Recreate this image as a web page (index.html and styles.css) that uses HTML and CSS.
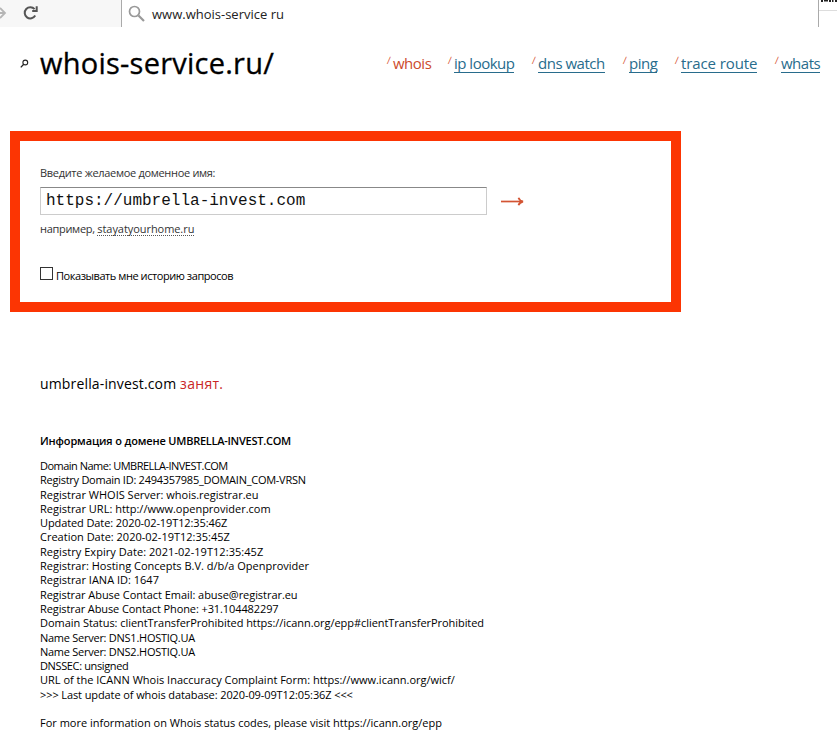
FILE: index.html
```html
<!DOCTYPE html>
<html lang="ru">
<head>
<meta charset="utf-8">
<title>whois-service.ru</title>
<link rel="stylesheet" href="styles.css">
</head>
<body>
<div class="toolbar">
  <div class="nav-buttons">
    <svg class="forward" width="8" height="27" viewBox="0 0 8 27" fill="none" stroke="#b5b5b5" stroke-width="1.8"><path d="M0 13H5M0 8L5 13L0 18"/></svg>
    <svg class="reload" width="18" height="27" viewBox="0 0 18 27"><path d="M12.6 9.2A5.6 5.6 0 1 0 13.2 15.6" fill="none" stroke="#555" stroke-width="2"/><path d="M15.7 6.3V12H10.2V10H13.7V6.3Z" fill="#555"/></svg>
  </div>
  <div class="search">
    <svg width="18" height="18" viewBox="0 0 18 18" fill="none" stroke="#999"><circle cx="6.5" cy="6.5" r="5" stroke-width="1.7"/><path d="M10.5 10.5L16 16" stroke-width="2.2"/></svg>
    <span class="query">www.whois-service ru</span>
  </div>
  <div class="toolbar-end"><div class="tail"><svg width="18" height="2" viewBox="0 0 18 2" fill="#222"><path d="M2 0H4V2H2ZM5 0H9V1.5H5ZM10 0H12V2H10ZM13 0H14.5V2H13ZM16 0H18V2H16Z"/></svg></div></div>
</div>
<header class="header">
  <svg class="logo-mark" width="10" height="10" viewBox="0 0 10 10" fill="none" stroke="#222"><circle cx="5.3" cy="3.5" r="2.4" stroke-width="1.1"/><path d="M3.7 5.3L.8 8.4" stroke-width="1.3"/></svg>
  <h1 class="logo">whois-service.ru/</h1>
  <nav class="menu">
    <span class="item whois">whois</span>
    <span class="item ip"><a>ip lookup</a></span>
    <span class="item dns"><a>dns watch</a></span>
    <span class="item ping"><a>ping</a></span>
    <span class="item trace"><a>trace route</a></span>
    <span class="item whats"><a>whats</a></span>
  </nav>
</header>
<form class="lookup">
  <label class="label">Введите желаемое доменное имя:</label>
  <div class="row">
    <div class="field">https://umbrella-invest.com</div>
    <svg width="24" height="12" viewBox="0 0 24 12" fill="none" stroke="#d35433"><path d="M0 6.5H21" stroke-width="1.7"/><path d="M17.5 2.7Q18.5 5.7 22 6.5Q18.5 7.3 17.5 10.3" stroke-width="1.8"/></svg>
  </div>
  <p class="example"><span class="hint">например, </span><span class="sample">stayatyourhome.ru</span></p>
  <label class="history"><span class="box"></span><span>Показывать мне историю запросов</span></label>
</form>
<main class="result">
  <p class="status">umbrella-invest.com <span class="taken">занят.</span></p>
  <h2 class="title">Информация о домене <span class="domain">UMBRELLA-INVEST.COM</span></h2>
  <div class="record">
    <div class="name">Domain Name: UMBRELLA-INVEST.COM</div>
    <div class="caps">Registry Domain ID: 2494357985_DOMAIN_COM-VRSN</div>
    <div>Registrar WHOIS Server: whois.registrar.eu</div>
    <div>Registrar URL: http://www.openprovider.com</div>
    <div class="snug">Updated Date: 2020-02-19T12:35:46Z</div>
    <div>Creation Date: 2020-02-19T12:35:45Z</div>
    <div class="loose">Registry Expiry Date: 2021-02-19T12:35:45Z</div>
    <div>Registrar: Hosting Concepts B.V. d/b/a Openprovider</div>
    <div>Registrar IANA ID: 1647</div>
    <div class="slight">Registrar Abuse Contact Email: abuse@registrar.eu</div>
    <div class="snug">Registrar Abuse Contact Phone: +31.104482297</div>
    <div class="slight">Domain Status: clientTransferProhibited https://icann.org/epp#clientTransferProhibited</div>
    <div class="caps">Name Server: DNS1.HOSTIQ.UA</div>
    <div class="caps">Name Server: DNS2.HOSTIQ.UA</div>
    <div class="dnssec">DNSSEC: unsigned</div>
    <div>URL of the ICANN Whois Inaccuracy Complaint Form: https://www.icann.org/wicf/</div>
    <div class="snug">&gt;&gt;&gt; Last update of whois database: 2020-09-09T12:05:36Z &lt;&lt;&lt;</div>
    <div class="more">For more information on Whois status codes, please visit https://icann.org/epp</div>
  </div>
</main>
</body>
</html>
```
FILE: styles.css
```css
* { box-sizing: border-box; }
body { margin: 0; width: 837px; height: 732px; overflow: hidden; background: #fff; color: #000; font: 11px/14.3px "Trebuchet MS", "Open Sans", "Noto Sans", sans-serif; }
h1, h2, p { margin: 0; font-weight: 400; }
svg { display: block; flex: none; }
.toolbar { display: flex; height: 27px; }
.nav-buttons { display: flex; gap: 14px; width: 121px; background: #f7f7f7; }
.search { display: flex; align-items: center; gap: 5px; width: 697px; padding-left: 6px; border-left: 1px solid #aaa; }
.query { font-size: 13px; line-height: 27px; padding: 2px 0 0 1px; color: #222; white-space: pre; }
.toolbar-end { width: 19px; border-left: 1px solid #aaa; }
.tail { height: 11px; border-bottom: 1px solid #ddd; }
.header { display: flex; align-items: center; height: 74px; padding-left: 20px; }
.logo-mark { margin-right: 10px; }
.logo { width: 347px; margin-top: -2px; font-size: 29px; line-height: 36px; letter-spacing: .24px; color: #000; -webkit-text-stroke: .3px #000; white-space: nowrap; }
.menu { display: flex; font-size: 15px; line-height: 17px; letter-spacing: -.5px; color: #286c8c; white-space: nowrap; }
.item::before { content: "/"; display: inline-block; width: 5px; margin-right: 1px; font-size: 10px; color: #d9593a; vertical-align: 5px; line-height: 8px; transform: skewX(-4deg); }
.item a { border-bottom: 1px solid #286c8c; display: inline-block; }
.whois { width: 61px; color: #cc4b2c; }
.ip { width: 84px; }
.dns { width: 91px; }
.ping { width: 52px; }
.trace { width: 100px; letter-spacing: -.1px; }
.lookup { width: 671px; height: 181px; margin: 30px 0 0 10px; padding: 24px 20px 0; border: 10px solid #fc3503; color: #333; }
.label { display: block; line-height: 15px; margin-bottom: 7px; letter-spacing: -.31px; }
.row { display: flex; align-items: center; gap: 14px; }
.field { width: 447px; height: 28px; padding-left: 5px; border: 1px solid #ccc; border-top-color: #888; font: 16px/26px "Liberation Mono", monospace; color: #111; }
.example { margin-top: 6px; line-height: 15px; }
.hint { letter-spacing: -.3px; }
.sample { border-bottom: 1px dotted #555; display: inline-block; line-height: 13px; letter-spacing: -.06px; }
.history { display: flex; gap: 3px; margin-top: 31px; line-height: 17px; letter-spacing: -.44px; color: #000; }
.box { width: 13px; height: 13px; border: 1px solid #333; background: #fff; }
.result { padding: 62px 0 0 40px; }
.status { font-size: 14px; line-height: 20px; letter-spacing: .15px; }
.taken { color: #c92626; letter-spacing: .3px; }
.title { margin: 40px 0 0; font-size: 11px; line-height: 14px; font-weight: 600; letter-spacing: -.14px; }
.domain { letter-spacing: -.26px; }
.record { margin-top: 11px; white-space: nowrap; }
.name { letter-spacing: -.51px; }
.caps { letter-spacing: -.26px; }
.dnssec { letter-spacing: -.37px; }
.snug { letter-spacing: -.1px; }
.slight { letter-spacing: -.05px; }
.loose { letter-spacing: .05px; }
.more { margin-top: 14px; }
```
